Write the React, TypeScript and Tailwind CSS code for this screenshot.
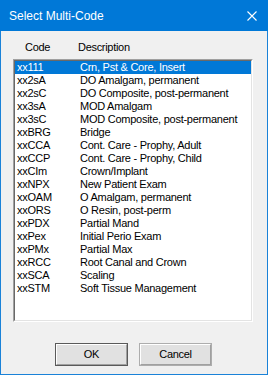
const rows: [string, string][] = [
  ["xx111", "Crn, Pst & Core, Insert"],
  ["xx2sA", "DO Amalgam, permanent"],
  ["xx2sC", "DO Composite, post-permanent"],
  ["xx3sA", "MOD Amalgam"],
  ["xx3sC", "MOD Composite, post-permanent"],
  ["xxBRG", "Bridge"],
  ["xxCCA", "Cont. Care - Prophy, Adult"],
  ["xxCCP", "Cont. Care - Prophy, Child"],
  ["xxCIm", "Crown/Implant"],
  ["xxNPX", "New Patient Exam"],
  ["xxOAM", "O Amalgam, permanent"],
  ["xxORS", "O Resin, post-perm"],
  ["xxPDX", "Partial Mand"],
  ["xxPex", "Initial Perio Exam"],
  ["xxPMx", "Partial Max"],
  ["xxRCC", "Root Canal and Crown"],
  ["xxSCA", "Scaling"],
  ["xxSTM", "Soft Tissue Management"],
]

function Button({ label, isDefault }: { label: string; isDefault?: boolean }) {
  return (
    <button
      className={
        "w-[73px] h-[23px] bg-[#e1e1e1] text-[11px] text-black tracking-[-0.3px] " +
        (isDefault ? "border border-[#5a5a5a]" : "border border-[#adadad]")
      }
    >
      <span className="flex h-full w-full items-center justify-center border-t border-l border-white border-b border-r border-b-[#a0a0a0] border-r-[#a0a0a0]">
        {label}
      </span>
    </button>
  )
}

export default function App() {
  return (
    <div
      className="w-[268px] h-[375px] flex flex-col bg-[#f0f0f0] border-x border-b border-[#1a82d8] select-none"
      style={{ fontFamily: '"Liberation Sans", Arial, sans-serif' }}
    >
      {/* Title bar */}
      <div className="h-[31px] -mx-px bg-[#0078d7] flex items-center justify-between pl-[9px] pr-[11px]">
        <span className="text-white text-[12px] leading-none">Select Multi-Code</span>
        <svg width="10" height="10" viewBox="0 0 10 10" className="mt-px">
          <path d="M0.5 0.5 L9.5 9.5 M9.5 0.5 L0.5 9.5" stroke="white" strokeWidth="1.1" />
        </svg>
      </div>

      <div className="flex-1 flex flex-col pl-[12px] pt-[10px]">
        {/* Column headers */}
        <div className="flex h-[13px] items-center text-[11px] text-black leading-none tracking-[-0.3px]">
          <span className="pl-[12px] w-[65px]">Code</span>
          <span>Description</span>
        </div>

        {/* List box */}
        <div className="mt-[5px] w-[240px] h-[263px] border border-t-[#a0a0a0] border-l-[#a0a0a0] border-r-white border-b-white">
          <div className="h-full w-full bg-white border border-t-[#696969] border-l-[#696969] border-r-[#e3e3e3] border-b-[#e3e3e3]">
            {rows.map(([code, desc], i) => (
              <div
                key={code}
                className={
                  "flex h-[13px] items-center text-[11px] leading-none tracking-[-0.25px] " +
                  (i === 0 ? "bg-[#0078d7] text-white" : "text-black")
                }
              >
                <span className="pl-[2px] w-[65px]">{code}</span>
                <span>{desc}</span>
              </div>
            ))}
          </div>
        </div>

        {/* Buttons */}
        <div className="flex gap-[11px] mt-[21px] pl-[42px]">
          <Button label="OK" isDefault />
          <Button label="Cancel" />
        </div>
      </div>
    </div>
  )
}
